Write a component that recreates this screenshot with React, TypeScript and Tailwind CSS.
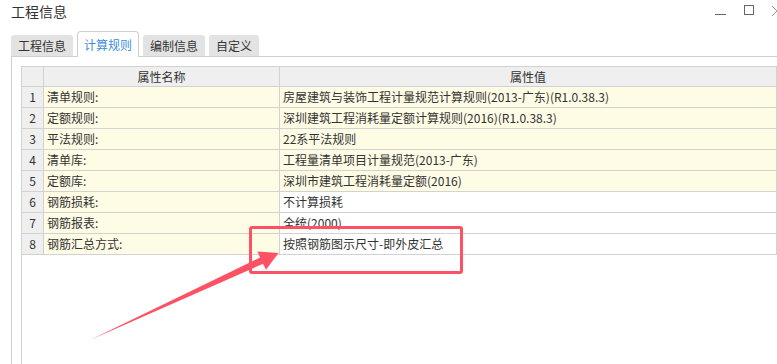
import { useState } from 'react'

const tabs = ['工程信息', '计算规则', '编制信息', '自定义']

const rows = [
  { name: '清单规则:', value: '房屋建筑与装饰工程计量规范计算规则(2013-广东)(R1.0.38.3)', locked: true },
  { name: '定额规则:', value: '深圳建筑工程消耗量定额计算规则(2016)(R1.0.38.3)', locked: true },
  { name: '平法规则:', value: '22系平法规则', locked: true },
  { name: '清单库:', value: '工程量清单项目计量规范(2013-广东)', locked: true },
  { name: '定额库:', value: '深圳市建筑工程消耗量定额(2016)', locked: true },
  { name: '钢筋损耗:', value: '不计算损耗', locked: false },
  { name: '钢筋报表:', value: '全统(2000)', locked: false },
  { name: '钢筋汇总方式:', value: '按照钢筋图示尺寸-即外皮汇总', locked: false },
]

export default function App() {
  const [active, setActive] = useState(1)

  return (
    <div
      className="relative w-[777px] h-[364px] overflow-hidden bg-white text-[#333]"
      style={{ fontFamily: '"Noto Sans CJK SC", "Noto Sans", sans-serif' }}
    >
      {/* Title bar */}
      <div className="flex h-[31px] items-start justify-between pl-[11px] pt-[1px]">
        <span className="text-[14px] leading-[20px]">工程信息</span>
        <div className="flex items-start gap-[18px] pt-[4px]">
          <span className="mt-[9px] block h-px w-[11px] bg-[#666]" />
          <span className="block h-[10px] w-[10px] border border-[#666]" />
          {/* close glyph, cut by the window edge */}
          <svg width="5" height="10" viewBox="0 0 5 10" className="mt-[1px]">
            <path d="M0 0 L5 5 M0 10 L5 5" stroke="#999" strokeWidth="1" />
          </svg>
        </div>
      </div>

      {/* Tab strip */}
      <div className="relative z-10 flex h-[25px] items-end gap-[4px] pl-[11px]">
        {tabs.map((t, i) =>
          i === active ? (
            <button
              key={t}
              onClick={() => setActive(i)}
              className="-mb-px h-[26px] rounded-t-[4px] border border-b-0 border-[#cfcfcf] bg-white px-[6px] text-[12px] leading-[24px] text-[#3b8de0]"
            >
              {t}
            </button>
          ) : (
            <button
              key={t}
              onClick={() => setActive(i)}
              className="h-[21px] rounded-t-[3px] bg-[#e3e3e3] px-[7px] text-[12px] leading-[21px] text-[#333]"
            >
              {t}
            </button>
          )
        )}
      </div>

      {/* Panel */}
      <div className="ml-[11px] h-[308px] border-t border-l border-[#cfcfcf] pt-[9px] pl-[9px]">
        <div className="h-full border-t border-l border-[#d2d2d2]">
          <div className="grid grid-cols-[22px_236px_497px] text-[12px] leading-[20px]">
            <div className="h-[20px] border-r border-b border-[#d2d2d2] bg-[#efefef]" />
            <div className="h-[20px] border-r border-b border-[#d2d2d2] bg-[#efefef] text-center">属性名称</div>
            <div className="h-[20px] border-r border-b border-[#d2d2d2] bg-[#efefef] text-center">属性值</div>
            {rows.map((r, i) => (
              <div key={r.name} className="contents">
                <div className="h-[21px] border-r border-b border-[#d2d2d2] bg-[#efefef] text-center">{i + 1}</div>
                <div className="h-[21px] border-r border-b border-[#d2d2d2] bg-[#fffce6] pl-[3px]">{r.name}</div>
                <div
                  className={`h-[21px] border-r border-b border-[#d2d2d2] pl-[3px] ${
                    r.locked ? 'bg-[#fffce6]' : 'bg-white'
                  }`}
                >
                  {r.value}
                </div>
              </div>
            ))}
          </div>
        </div>
      </div>

      {/* Annotation: red box + arrow */}
      <div className="pointer-events-none absolute left-[249px] top-[226px] h-[48px] w-[214px] rounded-[3px] border-[3px] border-[#fe5163]" />
      <svg className="pointer-events-none absolute left-0 top-0" width="777" height="364">
        <polygon
          points="90,340 260,257.5 257.5,251.5 278.5,253 266,269.7 263,263.8"
          fill="#fe5163"
        />
      </svg>
    </div>
  )
}
